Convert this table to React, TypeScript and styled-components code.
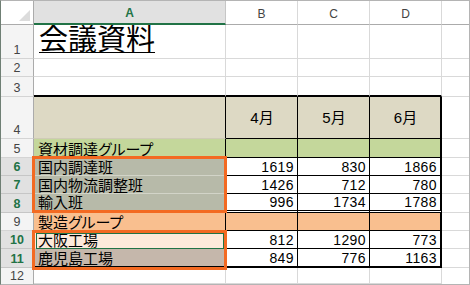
import React from "react"
import styled, { createGlobalStyle, css } from "styled-components"

const GlobalStyle = createGlobalStyle`
  html, body {
    margin: 0;
    padding: 0;
    background: #ffffff;
  }
`

const GRID = "1px solid #d9d9d9"
const BLACK = "1px solid #000000"
const SEL_GREEN = "#217346"

const Sheet = styled.div`
  position: relative;
  box-sizing: border-box;
  width: 470px;
  height: 285px;
  border: 1px solid #b4b4b4;
  border-left-color: #6f7f74;
  display: grid;
  grid-template-columns: 33px 192px 72px 72px 72px 1fr;
  grid-template-rows: 24px 34px 18px 20px 42px 19px 18px 18px 19px 18px 18px 19px 1fr;
  background: #ffffff;
  font-family: "Liberation Sans", "Noto Sans CJK JP", sans-serif;
  overflow: hidden;
`

const Corner = styled.div`
  position: relative;
  box-sizing: border-box;
  background: #ffffff;
  border-right: 1px solid #ababab;
  border-bottom: 1px solid #ababab;

  &::after {
    content: "";
    position: absolute;
    right: 3px;
    bottom: 3px;
    width: 0;
    height: 0;
    border-left: 11px solid transparent;
    border-bottom: 11px solid #dcdcdc;
  }
`

const ColHead = styled.div<{ $sel?: boolean }>`
  box-sizing: border-box;
  display: flex;
  align-items: center;
  justify-content: center;
  padding-top: 2px;
  font-size: 12px;
  color: #444444;
  background: #ffffff;
  border-right: ${GRID};
  border-bottom: 1px solid #ababab;

  ${p =>
    p.$sel &&
    css`
      background: #e1e1e1;
      color: ${SEL_GREEN};
      font-weight: bold;
      border-bottom: 2px solid ${SEL_GREEN};
      border-right: 1px solid #c6c6c6;
    `}
`

const RowHead = styled.div<{ $sel?: boolean }>`
  box-sizing: border-box;
  display: flex;
  align-items: flex-end;
  justify-content: center;
  padding-bottom: 2px;
  font-size: 12.5px;
  line-height: 1;
  color: #444444;
  background: #f4f4f4;
  border-right: 1px solid #ababab;
  border-bottom: 1px solid #d4d4d4;

  ${p =>
    p.$sel &&
    css`
      background: #e1e1e1;
      color: ${SEL_GREEN};
      font-weight: bold;
      border-bottom-color: #c6c6c6;
    `}
`

const Cell = styled.div<{
  $bg?: string
  $align?: "left" | "right" | "center"
  $middle?: boolean
  $bb?: string
  $br?: string
  $num?: boolean
}>`
  box-sizing: border-box;
  display: flex;
  min-width: 0;
  overflow: hidden;
  align-items: ${p => (p.$middle ? "center" : "flex-end")};
  justify-content: ${p =>
    p.$align === "right" ? "flex-end" : p.$align === "center" ? "center" : "flex-start"};
  padding: ${p => (p.$num ? "0 3px 1px 3px" : "0 3px 0 4px")};
  background: ${p => p.$bg ?? "#ffffff"};
  border-right: ${p => p.$br ?? GRID};
  border-bottom: ${p => p.$bb ?? GRID};
  font-size: ${p => (p.$num ? "14px" : "15px")};
  line-height: 1;
  color: #000000;
  white-space: nowrap;
  font-feature-settings: "palt";
  letter-spacing: ${p => (p.$num ? "0.4px" : "0")};
`

const Title = styled.span`
  font-size: 29px;
  line-height: 1;
  text-decoration: underline;
  text-decoration-thickness: 1px;
  text-underline-offset: 2px;
  margin-left: 1px;
  margin-bottom: 3px;
`

const Selection = styled.div<{ $top: number; $height: number }>`
  position: absolute;
  box-sizing: border-box;
  left: 31px;
  width: 195px;
  top: ${p => p.$top}px;
  height: ${p => p.$height}px;
  border: 3px solid #f36a22;
  pointer-events: none;
`

const ActiveCell = styled.div`
  position: absolute;
  box-sizing: border-box;
  left: 35px;
  top: 232px;
  width: 188px;
  height: 16px;
  border: 1px solid ${SEL_GREEN};
  pointer-events: none;
`

type Row = {
  n: number
  sel?: boolean
  a?: string
  aBg?: string
  bg?: string
  vals?: [number, number, number]
  head?: boolean
}

const rows: Row[] = [
  { n: 1 },
  { n: 2 },
  { n: 3 },
  { n: 4, bg: "#ddd9c4", head: true },
  { n: 5, a: "資材調達グループ", bg: "#c4d79b" },
  { n: 6, sel: true, a: "国内調達班", aBg: "#b7baa9", vals: [1619, 830, 1866] },
  { n: 7, sel: true, a: "国内物流調整班", aBg: "#b7baa9", vals: [1426, 712, 780] },
  { n: 8, sel: true, a: "輸入班", aBg: "#b7baa9", vals: [996, 1734, 1788] },
  { n: 9, a: "製造グループ", bg: "#f9bf8f" },
  { n: 10, sel: true, a: "大阪工場", aBg: "#fdeadb", vals: [812, 1290, 773] },
  { n: 11, sel: true, a: "鹿児島工場", aBg: "#c5b7ab", vals: [849, 776, 1163] },
  { n: 12 },
]

const months = ["4月", "5月", "6月"]

// bottom border of a table cell, by row number and column index (0 = A)
function bottomFor(n: number, c: number): string {
  if (n === 3) return "2px solid #000000"
  if (n === 4) return c === 0 ? "1px solid #cfcbb6" : BLACK
  if (n === 8) return "3px double #000000"
  if (n === 11) return "2px solid #000000"
  if (n >= 5 && n <= 10) return c === 0 ? "1px solid #d2d4c8" : BLACK
  return GRID
}

function rightFor(n: number, c: number): string {
  if (n < 4 || n > 11) return GRID
  return c === 3 ? "2px solid #000000" : BLACK
}

export default function App() {
  return (
    <>
      <GlobalStyle />
      <Sheet>
        <Corner />
        <ColHead $sel>A</ColHead>
        <ColHead>B</ColHead>
        <ColHead>C</ColHead>
        <ColHead>D</ColHead>
        <ColHead style={{ borderRight: "none" }} />

        {rows.map(r => (
          <React.Fragment key={r.n}>
            <RowHead $sel={r.sel} style={r.n === 12 ? { borderBottom: "none" } : undefined}>
              {r.n}
            </RowHead>
            <Cell $bg={r.aBg ?? r.bg} $bb={bottomFor(r.n, 0)} $br={rightFor(r.n, 0)}>
              {r.n === 1 ? <Title>会議資料</Title> : r.a}
            </Cell>
            {[0, 1, 2].map(i => (
              <Cell
                key={i}
                $bg={r.bg}
                $num={!!r.vals}
                $align={r.head ? "center" : "right"}
                $middle={r.head}
                $bb={bottomFor(r.n, i + 1)}
                $br={rightFor(r.n, i + 1)}
              >
                {r.head ? months[i] : r.vals ? r.vals[i] : null}
              </Cell>
            ))}
            <Cell $br="none" $bb={r.n === 12 ? "none" : GRID} />
          </React.Fragment>
        ))}

        <Selection $top={155} $height={57} />
        <Selection $top={229} $height={40} />
        <ActiveCell />
      </Sheet>
    </>
  )
}
